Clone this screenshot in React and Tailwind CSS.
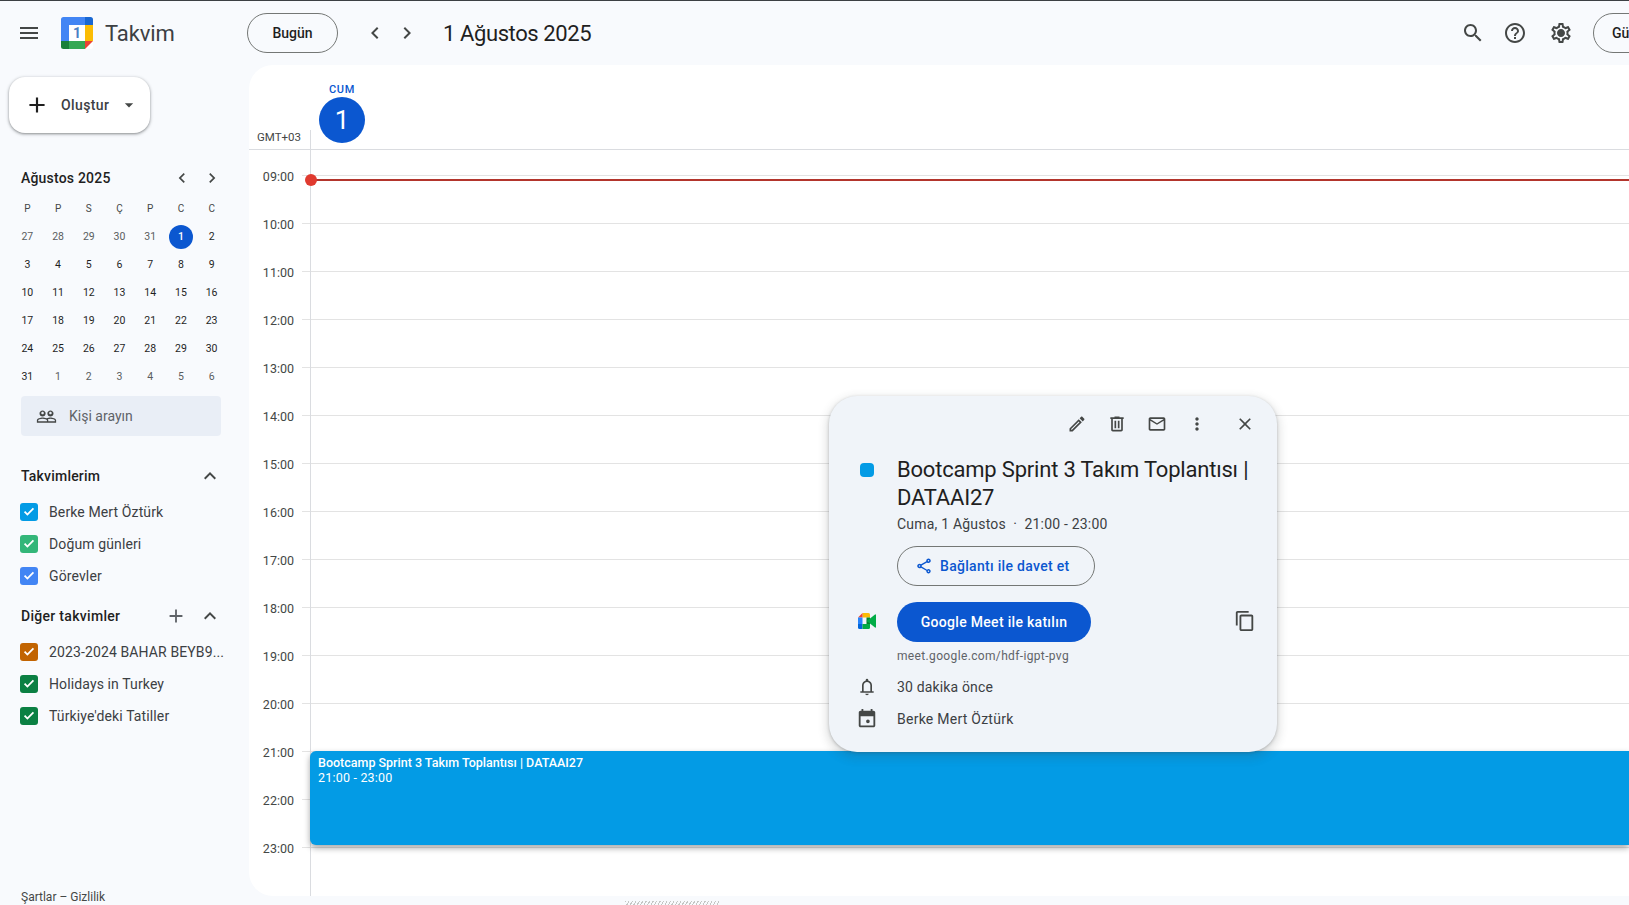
const P = {
  menu: "M3 18h18v-2H3v2zm0-5h18v-2H3v2zm0-7v2h18V6H3z",
  search: "M15.5 14h-.79l-.28-.27C15.41 12.59 16 11.11 16 9.5 16 5.91 13.09 3 9.5 3S3 5.91 3 9.5 5.91 16 9.5 16c1.61 0 3.09-.59 4.23-1.57l.27.28v.79l5 4.99L20.49 19l-4.99-5zm-6 0C7.01 14 5 11.99 5 9.5S7.01 5 9.5 5 14 7.01 14 9.5 11.99 14 9.5 14z",
  help: "M11 18h2v-2h-2v2zm1-16C6.48 2 2 6.48 2 12s4.48 10 10 10 10-4.48 10-10S17.52 2 12 2zm0 18c-4.41 0-8-3.59-8-8s3.59-8 8-8 8 3.59 8 8-3.59 8-8 8zm0-14c-2.21 0-4 1.79-4 4h2c0-1.1.9-2 2-2s2 .9 2 2c0 2-3 1.75-3 5h2c0-2.25 3-2.5 3-5 0-2.21-1.79-4-4-4z",
  gear: "M19.43 12.98c.04-.32.07-.64.07-.98 0-.34-.03-.66-.07-.98l2.11-1.65c.19-.15.24-.42.12-.64l-2-3.46c-.09-.16-.26-.25-.44-.25-.06 0-.12.01-.17.03l-2.49 1c-.52-.4-1.08-.73-1.69-.98l-.38-2.65C14.46 2.18 14.25 2 14 2h-4c-.25 0-.46.18-.49.42l-.38 2.65c-.61.25-1.17.59-1.69.98l-2.49-1c-.06-.02-.12-.03-.18-.03-.17 0-.34.09-.43.25l-2 3.46c-.13.22-.07.49.12.64l2.11 1.65c-.04.32-.07.65-.07.98 0 .33.03.66.07.98l-2.11 1.65c-.19.15-.24.42-.12.64l2 3.46c.09.16.26.25.44.25.06 0 .12-.01.17-.03l2.49-1c.52.4 1.08.73 1.69.98l.38 2.65c.03.24.24.42.49.42h4c.25 0 .46-.18.49-.42l.38-2.65c.61-.25 1.17-.59 1.69-.98l2.49 1c.06.02.12.03.18.03.17 0 .34-.09.43-.25l2-3.46c.12-.22.07-.49-.12-.64l-2.11-1.65zm-1.98-1.71c.04.31.05.52.05.73 0 .21-.02.43-.05.73l-.14 1.13.89.7 1.08.84-.7 1.21-1.27-.51-1.04-.42-.9.68c-.43.32-.84.56-1.25.73l-1.06.43-.16 1.13-.2 1.35h-1.4l-.19-1.35-.16-1.13-1.06-.43c-.43-.18-.83-.41-1.23-.71l-.91-.7-1.06.43-1.27.51-.7-1.21 1.08-.84.89-.7-.14-1.13c-.03-.31-.05-.54-.05-.74s.02-.43.05-.73l.14-1.13-.89-.7-1.08-.84.7-1.21 1.27.51 1.04.42.9-.68c.43-.32.84-.56 1.25-.73l1.06-.43.16-1.13.2-1.35h1.39l.19 1.35.16 1.13 1.06.43c.43.18.83.41 1.23.71l.91.7 1.06-.43 1.27-.51.7 1.21-1.07.85-.89.7.14 1.13zM12 8c-2.21 0-4 1.79-4 4s1.79 4 4 4 4-1.79 4-4-1.79-4-4-4z",
  left: "M15.41 7.41 14 6l-6 6 6 6 1.41-1.41L10.83 12z",
  right: "M10 6 8.59 7.41 13.17 12l-4.58 4.59L10 18l6-6z",
  up: "M12 8l-6 6 1.41 1.41L12 10.83l4.59 4.58L18 14z",
  add: "M19 13h-6v6h-2v-6H5v-2h6V5h2v6h6v2z",
  drop: "M7 10l5 5 5-5z",
  people: "M16.5 13c-1.2 0-3.07.34-4.5 1-1.43-.67-3.3-1-4.5-1C5.33 13 1 14.08 1 16.25V19h22v-2.75c0-2.17-4.33-3.25-6.5-3.25zm-4 4.5h-10v-1.25c0-.54 2.56-1.75 5-1.75s5 1.21 5 1.75v1.25zm9 0H14v-1.25c0-.46-.2-.86-.52-1.22.88-.3 1.96-.53 3.02-.53 2.44 0 5 1.21 5 1.75v1.25zM7.5 12c1.93 0 3.5-1.57 3.5-3.5S9.43 5 7.5 5 4 6.57 4 8.5 5.57 12 7.5 12zm0-5.5c.83 0 1.5.67 1.5 1.5s-.67 1.5-1.5 1.5S6 8.83 6 8s.67-1.5 1.5-1.5zm9 5.5c1.93 0 3.5-1.57 3.5-3.5S18.43 5 16.5 5 13 6.57 13 8.5s1.57 3.5 3.5 3.5zm0-5.5c.83 0 1.5.67 1.5 1.5s-.67 1.5-1.5 1.5S15 8.83 15 8s.67-1.5 1.5-1.5z",
  edit: "M14.06 9.02l.92.92L5.92 19H5v-.92l9.06-9.06M17.66 3c-.25 0-.51.1-.7.29l-1.83 1.83 3.75 3.75 1.83-1.83c.39-.39.39-1.02 0-1.41l-2.34-2.34c-.2-.2-.45-.29-.71-.29zm-3.6 3.19L3 17.25V21h3.75L17.81 9.94l-3.75-3.75z",
  trash: "M15 4V3H9v1H4v2h1v13c0 1.1.9 2 2 2h10c1.1 0 2-.9 2-2V6h1V4h-5zm2 15H7V6h10v13zM9 8h2v9H9zm4 0h2v9h-2z",
  mail: "M20 4H4c-1.1 0-1.99.9-1.99 2L2 18c0 1.1.9 2 2 2h16c1.1 0 2-.9 2-2V6c0-1.1-.9-2-2-2zm0 14H4V8l8 5 8-5v10zm-8-7L4 6h16l-8 5z",
  dots: "M12 8c1.1 0 2-.9 2-2s-.9-2-2-2-2 .9-2 2 .9 2 2 2zm0 2c-1.1 0-2 .9-2 2s.9 2 2 2 2-.9 2-2-.9-2-2-2zm0 6c-1.1 0-2 .9-2 2s.9 2 2 2 2-.9 2-2-.9-2-2-2z",
  close: "M19 6.41 17.59 5 12 10.59 6.41 5 5 6.41 10.59 12 5 17.59 6.41 19 12 13.41 17.59 19 19 17.59 13.41 12z",
  share: "M18 16.08c-.76 0-1.44.3-1.96.77L8.91 12.7c.05-.23.09-.46.09-.7s-.04-.47-.09-.7l7.05-4.11c.54.5 1.25.81 2.04.81 1.66 0 3-1.34 3-3s-1.34-3-3-3-3 1.34-3 3c0 .24.04.47.09.7L8.04 9.81C7.5 9.31 6.79 9 6 9c-1.66 0-3 1.34-3 3s1.34 3 3 3c.79 0 1.5-.31 2.04-.81l7.12 4.16c-.05.21-.08.43-.08.65 0 1.61 1.31 2.92 2.92 2.92s2.92-1.31 2.92-2.92-1.31-2.92-2.92-2.92zM18 4c.55 0 1 .45 1 1s-.45 1-1 1-1-.45-1-1 .45-1 1-1zM6 13c-.55 0-1-.45-1-1s.45-1 1-1 1 .45 1 1-.45 1-1 1zm12 7.02c-.55 0-1-.45-1-1s.45-1 1-1 1 .45 1 1-.45 1-1 1z",
  copy: "M16 1H4c-1.1 0-2 .9-2 2v14h2V3h12V1zm3 4H8c-1.1 0-2 .9-2 2v14c0 1.1.9 2 2 2h11c1.1 0 2-.9 2-2V7c0-1.1-.9-2-2-2zm0 16H8V7h11v14z",
  bell: "M4 19v-2h2v-7q0-2.08 1.25-3.69Q8.5 4.7 10.5 4.2V3.5q0-.62.44-1.06Q11.38 2 12 2t1.06.44q.44.44.44 1.06v.7q2 .5 3.25 2.11Q18 7.92 18 10v7h2v2zm8 3q-.83 0-1.41-.59Q10 20.83 10 20h4q0 .83-.59 1.41Q12.83 22 12 22zm-4-5h8v-7q0-1.65-1.17-2.83Q13.65 6 12 6T9.17 7.17Q8 8.35 8 10z",
  event: "M19 3h-1V1h-2v2H8V1H6v2H5c-1.11 0-1.99.9-1.99 2L3 19c0 1.1.89 2 2 2h14c1.1 0 2-.9 2-2V5c0-1.1-.9-2-2-2zm0 16H5V9h14v10zM13 12.5a2 2 0 1 1 0 4 2 2 0 0 1 0-4z",
  check: "M9.6 17.6 4.4 12.4l1.9-1.9 3.3 3.3 8.1-8.1 1.9 1.9z",
};

function Icon({ name, className = "w-6 h-6", color = "text-[#444746]" }) {
  return (
    <svg viewBox="0 0 24 24" className={`${className} ${color} fill-current shrink-0`}>
      <path d={P[name]} />
    </svg>
  );
}

function Logo() {
  return (
    <svg viewBox="0 0 32 32" className="w-8 h-8 shrink-0">
      <rect x="0" y="0" width="32" height="32" rx="2.5" fill="#fff" />
      <path d="M2.5 0H24v8H8v16H0V2.5A2.5 2.5 0 0 1 2.5 0z" fill="#4285f4" />
      <path d="M24 0h5.5A2.5 2.5 0 0 1 32 2.5V8h-8z" fill="#1967d2" />
      <path d="M24 8h8v16h-8z" fill="#fbbc04" />
      <path d="M8 24h16v8H8z" fill="#34a853" />
      <path d="M0 24h8v8H2.5A2.5 2.5 0 0 1 0 29.5z" fill="#188038" />
      <path d="M24 24h8l-8 8z" fill="#ea4335" />
      <path d="M8 8h16v16H8z" fill="#fff" />
      <text x="16" y="21" textAnchor="middle" fontSize="14" fontWeight="700" fontFamily="Roboto, sans-serif" fill="#4a80c4">1</text>
    </svg>
  );
}

function MeetLogo() {
  return (
    <svg viewBox="0 0 18 16" className="w-[18px] h-4 shrink-0">
      <path d="M4.5 0H10.5A1.5 1.5 0 0 1 12 1.5V4.5H4.5z" fill="#fbbc04" />
      <path d="M4.5 0v4.5H0z" fill="#ea4335" />
      <path d="M0 4.5h4.5v6.5H0z" fill="#2684fc" />
      <path d="M0 11h4.5v5H1.5A1.5 1.5 0 0 1 0 14.5z" fill="#0066da" />
      <path d="M4.5 11H12v3.5A1.5 1.5 0 0 1 10.5 16H4.5z" fill="#00ac47" />
      <path d="M8.5 4.5H12V11H8.5z" fill="#00832d" />
      <path d="M12 5.5 17 1.5A.6.6 0 0 1 18 2V14A.6.6 0 0 1 17 14.5L12 10.5 8.5 8z" fill="#00ac47" />
    </svg>
  );
}

const weeks = [
  [27, 28, 29, 30, 31, 1, 2],
  [3, 4, 5, 6, 7, 8, 9],
  [10, 11, 12, 13, 14, 15, 16],
  [17, 18, 19, 20, 21, 22, 23],
  [24, 25, 26, 27, 28, 29, 30],
  [31, 1, 2, 3, 4, 5, 6],
];

function MiniCalendar() {
  return (
    <div className="grid grid-cols-7 w-[215px] ml-[12px] mt-[4px]">
      {["P", "P", "S", "Ç", "P", "C", "C"].map((d, i) => (
        <div key={i} className="h-[28px] mb-[1px] flex items-center justify-center text-[10px] text-[#444746]">{d}</div>
      ))}
      {weeks.flat().map((d, i) => {
        const selected = i === 5;
        const muted = i < 5 || i > 35;
        return (
          <div key={i} className="h-7 flex items-center justify-center">
            <span
              className={`w-6 h-6 rounded-full flex items-center justify-center text-[10.5px] ${
                selected ? "bg-[#0b57d0] text-white font-medium" : muted ? "text-[#5a5d60]" : "text-[#1f1f1f]"
              }`}
            >
              {d}
            </span>
          </div>
        );
      })}
    </div>
  );
}

function CalRow({ color, label }) {
  return (
    <div className="h-8 flex items-center pl-[20px]">
      <span className={`w-[18px] h-[18px] rounded-[3px] shrink-0 flex items-center justify-center ${color}`}>
        <Icon name="check" className="w-4 h-4" color="text-white" />
      </span>
      <span className="ml-[11px] text-[14px] tracking-[0.12px] text-[#3c4043] whitespace-nowrap">{label}</span>
    </div>
  );
}

function Sidebar() {
  return (
    <aside className="w-[249px] shrink-0 flex flex-col relative">
      <button className="ml-[9px] mt-[12px] w-[141px] h-[56px] rounded-[16px] bg-white shadow-[0_1px_3px_1px_rgba(60,64,67,0.22),0_1px_2px_rgba(60,64,67,0.35)] flex items-center pl-[15px]">
        <Icon name="add" className="w-[26px] h-[26px]" color="text-[#1f1f1f]" />
        <span className="ml-[11px] text-[14px] font-medium tracking-[0.4px] text-[#3c4043]">Oluştur</span>
        <Icon name="drop" className="w-5 h-5 ml-[10px]" />
      </button>
      <div className="mt-[33px] h-6 pl-[21px] pr-[27px] flex items-center justify-between">
        <span className="text-[14px] font-medium tracking-[0.2px] text-[#1f1f1f]">Ağustos 2025</span>
        <div className="flex items-center gap-[10px]">
          <Icon name="left" className="w-5 h-5" />
          <Icon name="right" className="w-5 h-5" />
        </div>
      </div>
      <MiniCalendar />
      <div className="ml-[21px] w-[200px] h-10 mt-[5px] bg-[#e9eef6] rounded-[4px] flex items-center pl-[15px]">
        <Icon name="people" className="w-[21px] h-[21px]" />
        <span className="ml-[12px] text-[14px] text-[#5f6368]">Kişi arayın</span>
      </div>
      <div className="mt-[28px] h-6 pl-[21px] pr-[27px] flex items-center justify-between">
        <span className="text-[14px] font-medium tracking-[0.2px] text-[#1f1f1f]">Takvimlerim</span>
        <Icon name="up" />
      </div>
      <div className="mt-[8px]">
        <CalRow color="bg-[#039be5]" label="Berke Mert Öztürk" />
        <CalRow color="bg-[#33b679]" label="Doğum günleri" />
        <CalRow color="bg-[#4285f4]" label="Görevler" />
      </div>
      <div className="mt-[12px] h-6 pl-[21px] pr-[27px] flex items-center">
        <span className="text-[14px] font-medium tracking-[0.3px] text-[#1f1f1f]">Diğer takvimler</span>
        <Icon name="add" className="w-[22px] h-[22px] ml-auto mr-[11px]" color="text-[#5f6368]" />
        <Icon name="up" />
      </div>
      <div className="mt-[8px]">
        <CalRow color="bg-[#c26401]" label="2023-2024 BAHAR BEYB9..." />
        <CalRow color="bg-[#0b8043]" label="Holidays in Turkey" />
        <CalRow color="bg-[#0b8043]" label="Türkiye'deki Tatiller" />
      </div>
      <div className="mt-auto pl-[21px] h-[15px] text-[12px] leading-[15px] text-[#444746] whitespace-nowrap">Şartlar – Gizlilik</div>
    </aside>
  );
}

const hours = ["09:00","10:00","11:00","12:00","13:00","14:00","15:00","16:00","17:00","18:00","19:00","20:00","21:00","22:00","23:00"];

function CalendarCard() {
  return (
    <main className="flex-1 min-w-0 mb-[9px] bg-white rounded-l-[24px] flex flex-col overflow-hidden">
      <div className="h-[85px] shrink-0 border-b border-[#dadce0] relative flex">
        <div className="w-[61px] shrink-0 flex items-end pb-[4px] pl-[8px]">
          <span className="text-[11.5px] leading-4 text-[#444746] whitespace-nowrap">GMT+03</span>
        </div>
        <div className="w-[64px] flex flex-col items-center pt-[17px]">
          <span className="text-[11px] leading-[15px] font-medium text-[#0b57d0] tracking-[0.7px]">CUM</span>
          <span className="w-[46px] h-[46px] rounded-full bg-[#0b57d0] text-white text-[26px] flex items-center justify-center">1</span>
        </div>
        <div className="absolute left-[61px] bottom-0 h-[19px] w-px bg-[#dadce0]" />
      </div>
      <div className="flex-1 flex min-h-0">
        <div className="w-[53px] shrink-0 pt-[19px] pr-[8px]">
          {hours.map((h) => (
            <div key={h} className="h-12 text-right text-[12.5px] leading-4 text-[#444746]">{h}</div>
          ))}
        </div>
        <div className="w-2 shrink-0 pt-[25px]">
          {hours.map((h) => (
            <div key={h} className="h-12 border-t border-[#e3e3e3]" />
          ))}
        </div>
        <div className="flex-1 border-l border-[#dadce0] pt-[25px] relative">
          {hours.map((h) => (
            <div key={h} className="h-12 border-t border-[#e3e3e3]" />
          ))}
          <div className="absolute left-0 right-0 top-[29px] h-[2px] bg-[#b3352c]" />
          <div className="absolute left-[-6px] top-[24px] w-3 h-3 rounded-full bg-[#e03a2f]" />
          <div className="absolute left-[-1px] right-0 top-[601px] h-[94px] bg-[#039be5] rounded-l-[6px] shadow-[0_3px_6px_rgba(0,0,0,0.35)] pl-[8px] pt-[4px] text-white text-[12.5px] leading-[15px]">
            <div className="font-medium">Bootcamp Sprint 3 Takım Toplantısı | DATAAI27</div>
            <div className="tracking-[0.2px]">21:00 - 23:00</div>
          </div>
        </div>
      </div>
    </main>
  );
}

function Popover() {
  return (
    <div className="absolute left-[829px] top-[395px] w-[448px] h-[356px] bg-[#f0f4f9] rounded-[28px] shadow-[0_4px_8px_3px_rgba(60,64,67,0.15),0_1px_3px_rgba(60,64,67,0.3)] flex flex-col">
      <div className="h-[57px] shrink-0 flex items-center pb-[1px] pl-[238px]">
        <Icon name="edit" className="w-5 h-5" />
        <Icon name="trash" className="w-5 h-5 ml-[20px]" />
        <Icon name="mail" className="w-5 h-5 ml-[20px]" />
        <Icon name="dots" className="w-5 h-5 ml-[20px]" />
        <Icon name="close" className="w-5 h-5 ml-[28px]" />
      </div>
      <div className="flex pl-[31px]">
        <span className="w-[14px] h-[14px] mt-[10px] rounded-[4px] bg-[#039be5] shrink-0" />
        <div className="ml-[23px] w-[370px]">
          <div className="text-[22px] leading-[28px] tracking-[-0.2px] text-[#1f1f1f] pt-[3px]">Bootcamp Sprint 3 Takım Toplantısı | DATAAI27</div>
          <div className="text-[14px] leading-5 tracking-[0.2px] text-[#3c4043] mt-[2px]">Cuma, 1 Ağustos &nbsp;·&nbsp; 21:00 - 23:00</div>
          <button className="mt-[12px] w-[198px] h-10 rounded-full border border-[#747775] flex items-center pl-[17px]">
            <Icon name="share" className="w-[18px] h-[18px]" color="text-[#0b57d0]" />
            <span className="ml-[7px] text-[14px] font-medium tracking-[0.3px] text-[#0b57d0] whitespace-nowrap">Bağlantı ile davet et</span>
          </button>
        </div>
      </div>
      <div className="flex items-center mt-[16px] pl-[29px] pr-[21px]">
        <span className="-translate-y-[1px]"><MeetLogo /></span>
        <button className="ml-[21px] w-[194px] h-10 rounded-full bg-[#0b57d0] text-white text-[14px] font-medium tracking-[0.3px]">Google Meet ile katılın</button>
        <span className="ml-auto -translate-y-[1px]"><Icon name="copy" className="w-[22px] h-[22px]" /></span>
      </div>
      <div className="pl-[68px] mt-[6px] text-[12px] leading-4 tracking-[0.35px] text-[#5f6368]">meet.google.com/hdf-igpt-pvg</div>
      <div className="flex items-center h-8 mt-[7px] pl-[28px]">
        <Icon name="bell" className="w-5 h-5" />
        <span className="ml-[20px] text-[14px] tracking-[0.15px] text-[#3c4043]">30 dakika önce</span>
      </div>
      <div className="flex items-center h-8 pl-[27px]">
        <Icon name="event" className="w-[22px] h-[22px]" />
        <span className="ml-[19px] text-[14px] tracking-[0.25px] text-[#3c4043]">Berke Mert Öztürk</span>
      </div>
    </div>
  );
}

export default function App() {
  return (
    <div className="relative w-[1629px] h-[905px] overflow-hidden bg-[#f8fafd] border-t border-[#3c4043] flex flex-col font-['Roboto',sans-serif]">
      <header className="h-[64px] shrink-0 flex items-center">
        <div className="w-[247px] shrink-0 flex items-center pl-[17px]">
          <Icon name="menu" />
          <span className="ml-[20px]"><Logo /></span>
          <span className="ml-[12px] text-[22px] tracking-[-0.1px] text-[#3c4043]">Takvim</span>
        </div>
        <button className="w-[91px] h-10 shrink-0 rounded-full border border-[#747775] text-[14px] font-medium text-[#1f1f1f]">Bugün</button>
        <div className="ml-[25px] flex items-center gap-[8px]">
          <Icon name="left" />
          <Icon name="right" />
        </div>
        <h1 className="ml-[24px] text-[22px] font-normal tracking-[-0.4px] text-[#1f1f1f] whitespace-nowrap">1 Ağustos 2025</h1>
        <div className="ml-auto flex items-center shrink-0">
          <Icon name="search" />
          <Icon name="help" className="w-6 h-6 ml-[18px]" />
          <Icon name="gear" className="w-6 h-6 ml-[22px]" />
          <div className="ml-[20px] w-[36px] h-10 overflow-hidden">
            <button className="w-[100px] h-10 rounded-full border border-[#747775] text-left pl-[18px] text-[14px] font-medium text-[#1f1f1f]">Gün</button>
          </div>
        </div>
      </header>
      <div className="flex-1 flex min-h-0 relative">
        <Sidebar />
        <CalendarCard />
      </div>
      <div className="absolute left-[625px] bottom-0 w-[95px] h-[4px] bg-[repeating-linear-gradient(120deg,#c4c7c5_0px,#c4c7c5_1px,transparent_1px,transparent_3px)]" />
      <Popover />
    </div>
  );
}
